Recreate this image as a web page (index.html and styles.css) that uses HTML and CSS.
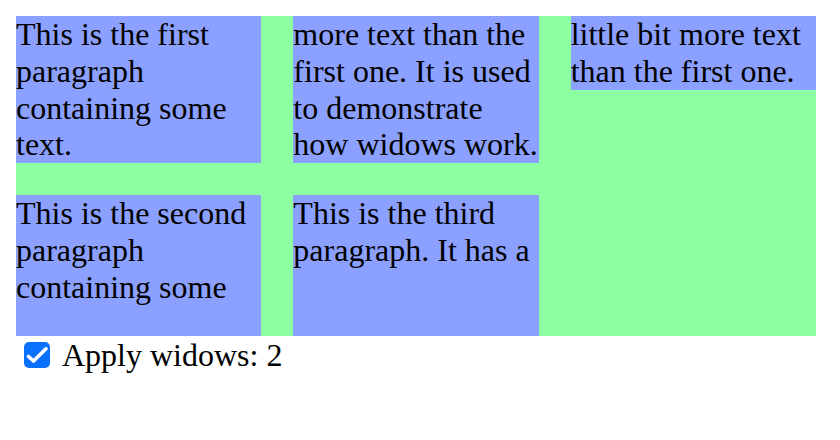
FILE: index.html
```html
<!DOCTYPE html>
<html>
<head>
<meta charset="utf-8">
<link rel="stylesheet" href="styles.css">
</head>
<body>
<div class="wrapper">
  <p>This is the first paragraph containing some text.</p>
  <p>This is the second paragraph containing some more text than the first one. It is used to demonstrate how widows work.</p>
  <p>This is the third paragraph. It has a little bit more text than the first one.</p>
</div>
<label class="toggle">
  <span class="box"><svg width="26" height="26" viewBox="0 0 26 26"><path d="M4.5 14.5 L9.5 19 L22 6.8" fill="none" stroke="#fff" stroke-width="3.6" stroke-linecap="round" stroke-linejoin="round"/></svg></span>
  <span class="text">Apply widows: 2</span>
</label>
</body>
</html>
```
FILE: styles.css
```css
html, body {
  margin: 0;
  background: #fff;
}
body {
  padding: 16px;
  font-family: "Liberation Serif", "Times New Roman", serif;
  font-size: 32px;
  line-height: 1.15;
  color: #000;
}
.wrapper {
  width: 800px;
  columns: 3;
  column-gap: 32px;
  column-fill: auto;
  height: 320px;
  background-color: #8cffa0;
}
.wrapper p {
  margin: 0 0 32px 0;
  background-color: #8ca0ff;
  widows: 2;
  orphans: 2;
}
.toggle {
  display: flex;
  align-items: center;
}
.box {
  display: block;
  width: 26px;
  height: 26px;
  margin: 6px 12px 6px 8px;
  background: #0b70fb;
  border-radius: 5px;
}
.box svg {
  display: block;
}
.text {
  display: block;
}
```
